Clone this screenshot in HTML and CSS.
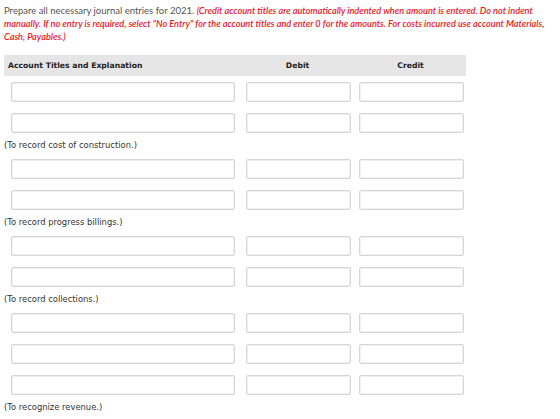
FILE: index.html
```html
<!DOCTYPE html>
<html lang="en">
<head>
    <meta charset="UTF-8" />
    <meta name="viewport" content="width=device-width, initial-scale=1.0" />
    <title>Journal Entries 2021</title>
    <link rel="stylesheet" href="styles.css">
</head>

<body>
    <!-- Instructions above the entry table -->
    <p class="intro">
        Prepare all necessary journal entries for 2021.
        <em class="note">(Credit account titles are automatically indented when amount is entered. Do not indent manually. If no entry is required, select "No Entry" for the account titles and enter 0 for the amounts. For costs incurred use account Materials, Cash, Payables.)</em>
    </p>

    <div class="journal">
        <!-- Column headings -->
        <div class="journal-head">
            <span class="col-title">Account Titles and Explanation</span>
            <span class="col-amount">Debit</span>
            <span class="col-amount">Credit</span>
        </div>

        <!-- Entry 1 -->
        <div class="entry-row">
            <input type="text" class="account" />
            <input type="text" class="amount" />
            <input type="text" class="amount" />
        </div>
        <div class="entry-row">
            <input type="text" class="account" />
            <input type="text" class="amount" />
            <input type="text" class="amount" />
        </div>
        <div class="explain">(To record cost of construction.)</div>

        <!-- Entry 2 -->
        <div class="entry-row">
            <input type="text" class="account" />
            <input type="text" class="amount" />
            <input type="text" class="amount" />
        </div>
        <div class="entry-row">
            <input type="text" class="account" />
            <input type="text" class="amount" />
            <input type="text" class="amount" />
        </div>
        <div class="explain">(To record progress billings.)</div>

        <!-- Entry 3 -->
        <div class="entry-row">
            <input type="text" class="account" />
            <input type="text" class="amount" />
            <input type="text" class="amount" />
        </div>
        <div class="entry-row">
            <input type="text" class="account" />
            <input type="text" class="amount" />
            <input type="text" class="amount" />
        </div>
        <div class="explain">(To record collections.)</div>

        <!-- Entry 4 -->
        <div class="entry-row">
            <input type="text" class="account" />
            <input type="text" class="amount" />
            <input type="text" class="amount" />
        </div>
        <div class="entry-row">
            <input type="text" class="account" />
            <input type="text" class="amount" />
            <input type="text" class="amount" />
        </div>
        <div class="entry-row">
            <input type="text" class="account" />
            <input type="text" class="amount" />
            <input type="text" class="amount" />
        </div>
        <div class="explain">(To recognize revenue.)</div>
    </div>
</body>
</html>
```

FILE: styles.css
```css
/* Basic reset and background */
body {
    font-family: Lato, "Open Sans", sans-serif;
    margin: 0;
    padding: 4px 2px 0 4px;
    background: #fff;
}

/* Instruction paragraph */
.intro {
    margin: 0 0 12px 0;
    font-size: 9.5px;
    line-height: 13px;
    color: #555;
}

.note {
    color: #f0141e;
    font-size: 9.2px;
    font-weight: 600;
}

/* Journal table */
.journal {
    width: 462px;
    font-family: "DejaVu Sans", Verdana, sans-serif;
    font-size: 8.4px;
    color: #333;
}

/* Header bar */
.journal-head {
    display: grid;
    grid-template-columns: 236px 113px 113px;
    align-items: center;
    height: 21px;
    background: #e6e6e6;
    font-size: 7.7px;
    font-weight: bold;
    color: #222;
}

.col-title {
    padding-left: 4px;
}

.col-amount {
    text-align: center;
    padding-left: 6px;
    padding-right: 4px;
}

/* Input rows */
.entry-row {
    display: grid;
    grid-template-columns: 236px 113px 113px;
    padding: 6px 0 5px 0;
}

.entry-row input {
    height: 20px;
    margin: 0;
    padding: 2px 4px;
    box-sizing: border-box;
    border: 1px solid #d6d6d6;
    border-radius: 2px;
    box-shadow: inset 0 0 0 1px #f0f0f0;
    background: #fff;
}

.entry-row .account {
    width: 224px;
    margin-left: 7px;
}

.entry-row .amount {
    width: 105px;
    margin-left: 6px;
}

/* Explanation line under each entry */
.explain {
    height: 15px;
    line-height: 15px;
}
```
